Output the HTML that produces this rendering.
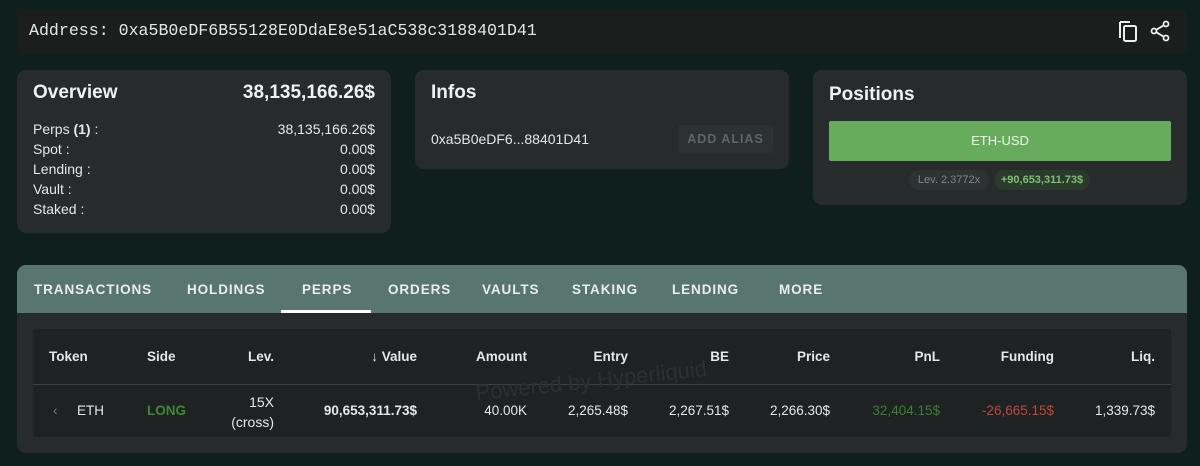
<!DOCTYPE html>
<html><head><meta charset="utf-8"><style>
*{margin:0;padding:0;box-sizing:border-box}
body{width:1200px;height:466px;background:#0e1f1d;font-family:"Liberation Sans",Arial,sans-serif;color:#e8e8e8;position:relative;overflow:hidden}
.a{position:absolute}
.card{position:absolute;background:#272b2c;border-radius:9px}
.r{text-align:right}
.lbl{font-size:14px;color:#e6e6e6}
.tab{position:absolute;top:282px;font-size:13.5px;font-weight:bold;letter-spacing:0.9px;color:#e8eeec}
.th{position:absolute;top:349px;font-size:13.5px;font-weight:bold;color:#e6e6e6}
.td{position:absolute;top:403px;font-size:13.5px;color:#e6e6e6}
</style></head><body>
<div class="a" style="left:17px;top:10px;width:1170px;height:43px;background:#1c1e1e;border-radius:6px"></div>
<div class="a" style="left:29px;top:21px;font-family:'Liberation Mono',monospace;font-size:16.6px;color:#e6e6e6">Address: 0xa5B0eDF6B55128E0DdaE8e51aC538c3188401D41</div>
<svg class="a" style="left:1116px;top:18px" width="24" height="26" viewBox="0 0 24 26"><path d="M4 4 V20 M4 4 H14" stroke="#eee" stroke-width="2" fill="none"/><rect x="8" y="8" width="12" height="15" rx="1.5" stroke="#eee" stroke-width="2" fill="none"/></svg>
<svg class="a" style="left:1148px;top:19px" width="24" height="24" viewBox="0 0 24 24"><circle cx="18" cy="5" r="2.5" stroke="#eee" stroke-width="1.8" fill="none"/><circle cx="6" cy="12" r="2.5" stroke="#eee" stroke-width="1.8" fill="none"/><circle cx="18" cy="19" r="2.5" stroke="#eee" stroke-width="1.8" fill="none"/><path d="M8.2 10.8 15.8 6.3 M8.2 13.2 15.8 17.7" stroke="#eee" stroke-width="1.8"/></svg>

<div class="card" style="left:17px;top:70px;width:374px;height:163px"></div>
<div class="a" style="left:33px;top:82px;font-size:19px;font-weight:bold;color:#f0f0f0">Overview</div>
<div class="a r" style="right:825px;top:82px;font-size:19px;font-weight:bold;color:#f0f0f0">38,135,166.26$</div>
<div class="a lbl" style="left:33px;top:119px;line-height:20px">Perps <b>(1)</b> :<br>Spot :<br>Lending :<br>Vault :<br>Staked :</div>
<div class="a lbl r" style="right:825px;top:119px;line-height:20px">38,135,166.26$<br>0.00$<br>0.00$<br>0.00$<br>0.00$</div>

<div class="card" style="left:415px;top:70px;width:374px;height:99px"></div>
<div class="a" style="left:431px;top:82px;font-size:19px;font-weight:bold;color:#f0f0f0">Infos</div>
<div class="a lbl" style="left:431px;top:131px">0xa5B0eDF6...88401D41</div>
<div class="a" style="left:678px;top:125px;width:95px;height:28px;background:#2c3131;border-radius:3px;font-size:12.5px;color:#5d6766;letter-spacing:1px;text-align:center;line-height:28px;font-weight:bold">ADD ALIAS</div>

<div class="card" style="left:813px;top:70px;width:374px;height:135px"></div>
<div class="a" style="left:829px;top:84px;font-size:19px;font-weight:bold;color:#f0f0f0">Positions</div>
<div class="a" style="left:829px;top:121px;width:342px;height:40px;background:#67ac5c;border-radius:2px;text-align:center;line-height:40px;font-size:13px;color:#f0f6ee">ETH-USD</div>
<div class="a" style="left:909px;top:170px;width:80px;height:20px;background:#2d3232;border-radius:10px;font-size:11px;text-align:center;line-height:20px;color:#7d8887">Lev. 2.3772x</div>
<div class="a" style="left:994px;top:170px;width:96px;height:20px;background:#2a3a2b;border-radius:10px;font-size:11px;text-align:center;line-height:20px;color:#7fbf72;font-weight:bold">+90,653,311.73$</div>

<div class="card" style="left:17px;top:265px;width:1170px;height:188px;overflow:hidden"><div style="height:48px;background:#587570"></div></div>
<div class="tab" style="left:34px">TRANSACTIONS</div>
<div class="tab" style="left:187px">HOLDINGS</div>
<div class="tab" style="left:302px">PERPS</div>
<div class="tab" style="left:388px">ORDERS</div>
<div class="tab" style="left:482px">VAULTS</div>
<div class="tab" style="left:572px">STAKING</div>
<div class="tab" style="left:672px">LENDING</div>
<div class="tab" style="left:779px">MORE</div>
<div class="a" style="left:281px;top:310px;width:90px;height:3px;background:#fff"></div>

<div class="a" style="left:33px;top:329px;width:1138px;height:108px;background:#1f2223;border-radius:3px"></div>
<div class="a" style="left:33px;top:384px;width:1138px;height:1px;background:#393e3f"></div>
<div class="th" style="left:49px">Token</div>
<div class="th" style="left:147px">Side</div>
<div class="th r" style="right:926px">Lev.</div>
<div class="th r" style="right:783px">↓ Value</div>
<div class="th r" style="right:673px">Amount</div>
<div class="th r" style="right:572px">Entry</div>
<div class="th r" style="right:471px">BE</div>
<div class="th r" style="right:370px">Price</div>
<div class="th r" style="right:260px">PnL</div>
<div class="th r" style="right:146px">Funding</div>
<div class="th r" style="right:45px">Liq.</div>
<div class="a" style="left:475px;top:368px;font-size:22px;color:#2b3030;transform:rotate(-6deg)">Powered by Hyperliquid</div>
<div class="td" style="left:53px;color:#777">‹</div>
<div class="td" style="left:77px">ETH</div>
<div class="td" style="left:147px;color:#3c8a2f;font-weight:bold">LONG</div>
<div class="a r" style="right:926px;top:392px;font-size:14px;line-height:20px">15X<br>(cross)</div>
<div class="td r" style="right:783px;font-weight:bold">90,653,311.73$</div>
<div class="td r" style="right:673px">40.00K</div>
<div class="td r" style="right:572px">2,265.48$</div>
<div class="td r" style="right:471px">2,267.51$</div>
<div class="td r" style="right:370px">2,266.30$</div>
<div class="td r" style="right:260px;color:#3b7e32">32,404.15$</div>
<div class="td r" style="right:146px;color:#c0463a">-26,665.15$</div>
<div class="td r" style="right:45px">1,339.73$</div>
</body></html>
